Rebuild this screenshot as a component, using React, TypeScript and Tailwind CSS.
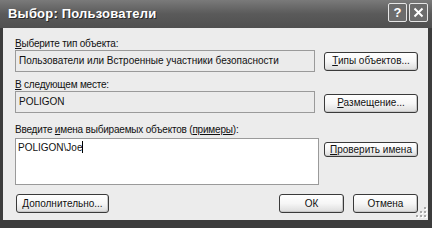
import React from 'react';

const font = { fontFamily: '"Liberation Sans", Arial, sans-serif' };

function XpButton({ children, className = '' }: { children: React.ReactNode; className?: string }) {
  return (
    <div
      className={`flex items-center justify-center rounded-[3px] border border-[#3a3a3a] bg-gradient-to-b from-[#ffffff] via-[#f6f6f6] to-[#dcdcdc] text-[10px] leading-none text-[#111] shadow-[inset_-1px_-1px_0_#c8c8c8] ${className}`}
    >
      {children}
    </div>
  );
}

function Grip() {
  const dots = [
    [8, 0],
    [4, 4],
    [8, 4],
    [0, 8],
    [4, 8],
    [8, 8],
  ];
  return (
    <svg width="11" height="11" viewBox="0 0 11 11" className="absolute right-[1px] bottom-[2px]">
      {dots.map(([x, y], i) => (
        <g key={i}>
          <rect x={x + 1} y={y + 1} width="2" height="2" fill="#ffffff" />
          <rect x={x} y={y} width="2" height="2" fill="#a8a8a8" />
        </g>
      ))}
    </svg>
  );
}

export default function App() {
  return (
    <div className="w-[432px] h-[228px] bg-[#3c3c3c] flex flex-col overflow-hidden" style={font}>
      {/* title bar */}
      <div className="h-[28px] shrink-0 flex items-center justify-between bg-gradient-to-b from-[#7a7a7a] via-[#5a5a5a] to-[#505050] pl-[8px] pr-[4px]">
        <span className="text-white font-bold text-[13px] tracking-[0.2px] [text-shadow:1px_1px_0_#2a2a2a]">
          Выбор: Пользователи
        </span>
        <div className="flex gap-[2px] -mt-[3px]">
          <div className="w-[19px] h-[19px] rounded-[2px] border border-[#e6e6e6] bg-[#6c6c6c] flex items-center justify-center text-white font-bold text-[13px] leading-none">
            ?
          </div>
          <div className="w-[19px] h-[19px] rounded-[2px] border border-[#e6e6e6] bg-[#6c6c6c] flex items-center justify-center">
            <svg width="11" height="11" viewBox="0 0 11 11">
              <path d="M1.5 1.5 L9.5 9.5 M9.5 1.5 L1.5 9.5" stroke="#ffffff" strokeWidth="2" />
            </svg>
          </div>
        </div>
      </div>

      {/* body */}
      <div className="relative flex-1 mx-[3px] mr-[4px] mb-[8px] bg-[#ececec] pl-[12px] pr-[10px] pt-[9px] text-[10px] text-[#111]">
        <div className="leading-[13px] tracking-[-0.2px]">
          <span className="underline">В</span>ыберите тип объекта:
        </div>
        <div className="flex items-center gap-[9px]">
          <div className="w-[300px] h-[22px] border border-[#9a9a9a] bg-[#ebebeb] flex items-center pl-[3px] leading-none">
            Пользователи или Встроенные участники безопасности
          </div>
          <XpButton className="w-[94px] h-[19px]">
            <span>
              <span className="underline">Т</span>ипы объектов...
            </span>
          </XpButton>
        </div>

        <div className="leading-[13px] mt-[6px] tracking-[-0.2px]">
          <span className="underline">В</span> следующем месте:
        </div>
        <div className="flex items-center gap-[9px]">
          <div className="w-[300px] h-[22px] border border-[#9a9a9a] bg-[#ebebeb] flex items-center pl-[3px] leading-none">
            POLIGON
          </div>
          <XpButton className="w-[94px] h-[19px] mt-[2px]">
            <span>
              <span className="underline">Р</span>азмещение...
            </span>
          </XpButton>
        </div>

        <div className="leading-[13px] mt-[10px] tracking-[-0.2px]">
          Введите <span className="underline">и</span>мена выбираемых объектов (<span className="underline">примеры</span>):
        </div>
        <div className="flex items-start gap-[5px] mt-[2px]">
          <div className="w-[304px] h-[47px] border border-[#9a9a9a] bg-white pl-[2px] pt-[2px] leading-[13px]">
            POLIGON\Joe<span className="inline-block w-px h-[12px] bg-black align-[-2px]" />
          </div>
          <XpButton className="w-[94px] h-[15px] mt-[4px] rounded-[1px]">
            <span>
              <span className="underline">П</span>роверить имена
            </span>
          </XpButton>
        </div>

        <div className="flex items-center mt-[9px]">
          <XpButton className="w-[93px] h-[19px] ml-[1px]">
            <span>
              <span className="underline">Д</span>ополнительно...
            </span>
          </XpButton>
          <div className="flex-1" />
          <XpButton className="w-[65px] h-[19px]">ОК</XpButton>
          <XpButton className="w-[65px] h-[19px] ml-[9px]">Отмена</XpButton>
        </div>
        <Grip />
      </div>
    </div>
  );
}
